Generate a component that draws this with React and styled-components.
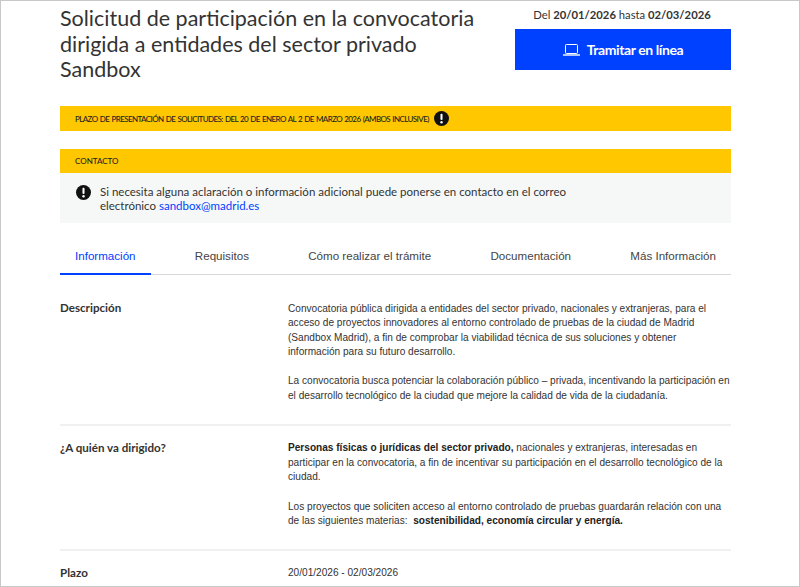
import React from "react";
import styled, { createGlobalStyle } from "styled-components";

const GlobalStyle = createGlobalStyle`
  html, body {
    margin: 0;
    padding: 0;
    background: #fff;
  }
  * {
    box-sizing: border-box;
  }
`;

const Frame = styled.div`
  width: 800px;
  height: 587px;
  overflow: hidden;
  border: 1px solid #c8c8c8;
  background: #fff;
  font-family: Lato, "Liberation Sans", sans-serif;
  color: #333;
`;

const Page = styled.div`
  width: 671px;
  margin-left: 59px;
  padding-top: 4px;
`;

const Header = styled.header`
  display: flex;
  justify-content: space-between;
  height: 101px;
`;

const Title = styled.h1`
  margin: 1px 0 0;
  width: 430px;
  font-size: 21.5px;
  line-height: 25.6px;
  font-weight: 400;
  color: #333;
`;

const Aside = styled.div`
  width: 216px;
  display: flex;
  flex-direction: column;
  align-items: stretch;
`;

const Dates = styled.div`
  height: 24px;
  padding-top: 1px;
  padding-right: 2px;
  font-size: 11.25px;
  line-height: 18px;
  text-align: center;
  b {
    font-weight: 700;
  }
`;

const TramitarButton = styled.button`
  height: 41px;
  border: 0;
  background: #0040ff;
  color: #fff;
  font-family: inherit;
  font-size: 14px;
  font-weight: 700;
  letter-spacing: -0.4px;
  display: flex;
  align-items: center;
  justify-content: center;
  gap: 7px;
`;

const Banner = styled.div`
  height: ${({ $tall }) => ($tall ? 25 : 24)}px;
  background: #ffc700;
  padding-left: 15px;
  display: flex;
  align-items: center;
  gap: 5px;
  font-size: 8px;
  font-weight: 500;
  letter-spacing: ${({ $tall }) => ($tall ? "-0.6px" : "0")};
  word-spacing: ${({ $tall }) => ($tall ? "0.8px" : "0")};
  color: #222;
  text-transform: uppercase;
`;

const ContactBlock = styled.section`
  margin-top: 18px;
`;

const ContactBody = styled.div`
  height: 50px;
  background: #f6f8f8;
  padding: 12px 14px 0 16px;
  display: flex;
  gap: 9px;
  font-size: 11.5px;
  line-height: 14px;
  a {
    color: #0040ff;
    text-decoration: none;
  }
`;

const ContactText = styled.div`
  width: 480px;
`;

const Tabs = styled.nav`
  margin-top: 18px;
  height: 34px;
  display: flex;
  justify-content: space-between;
  border-bottom: 1px solid #d8d8d8;
`;

const Tab = styled.div`
  height: 34px;
  padding: 7px 15px 0;
  font-family: "Liberation Sans", Arial, sans-serif;
  font-size: 11.6px;
  line-height: 16px;
  color: ${({ $active }) => ($active ? "#0040ff" : "#444")};
  border-bottom: 2px solid ${({ $active }) => ($active ? "#0040ff" : "transparent")};
`;

const Row = styled.section`
  display: grid;
  grid-template-columns: 228px 1fr;
  padding: ${({ $first }) => ($first ? "25px" : "14px")} 0 20px;
  border-bottom: ${({ $last }) => ($last ? "0" : "2px solid #f0f0f0")};
`;

const Label = styled.h3`
  margin: 0;
  font-size: 11.6px;
  line-height: 15px;
  font-weight: 700;
  color: #333;
`;

const Body = styled.div`
  padding-top: 1.5px;
  font-family: "Liberation Sans", Arial, sans-serif;
  font-size: 10.1px;
  line-height: 14.6px;
  color: #333;
  p {
    margin: 0 0 14.6px;
  }
  p:last-child {
    margin-bottom: 0;
  }
  b {
    color: #222;
  }
`;

const InfoIcon = () => (
  <svg width="15" height="15" viewBox="0 0 16 16" style={{ flex: "none" }}>
    <circle cx="8" cy="8" r="8" fill="#111" />
    <rect x="6.9" y="3" width="2.2" height="6.6" rx="1" fill="#fff" />
    <circle cx="8" cy="11.9" r="1.3" fill="#fff" />
  </svg>
);

const LaptopIcon = () => (
  <svg width="17" height="12" viewBox="0 0 17 12" fill="none" stroke="#fff" strokeWidth="1">
    <rect x="2.5" y="0.5" width="12" height="9" rx="0.8" />
    <path d="M0 11h17" strokeWidth="1.4" />
  </svg>
);

const tabs = ["Información", "Requisitos", "Cómo realizar el trámite", "Documentación", "Más Información"];

export default function App() {
  return (
    <Frame>
      <GlobalStyle />
      <Page>
        <Header>
          <Title>
            Solicitud de participación en la convocatoria dirigida a entidades del sector privado Sandbox
          </Title>
          <Aside>
            <Dates>
              Del <b>20/01/2026</b> hasta <b>02/03/2026</b>
            </Dates>
            <TramitarButton>
              <LaptopIcon />
              Tramitar en línea
            </TramitarButton>
          </Aside>
        </Header>

        <Banner $tall>
          Plazo de presentación de solicitudes: del 20 de enero al 2 de marzo 2026 (ambos inclusive)
          <InfoIcon />
        </Banner>

        <ContactBlock>
          <Banner>Contacto</Banner>
          <ContactBody>
            <InfoIcon />
            <ContactText>
              Si necesita alguna aclaración o información adicional puede ponerse en contacto en el correo
              electrónico <a href="#mail">sandbox@madrid.es</a>
            </ContactText>
          </ContactBody>
        </ContactBlock>

        <Tabs>
          {tabs.map((t, i) => (
            <Tab key={t} $active={i === 0}>
              {t}
            </Tab>
          ))}
        </Tabs>

        <Row $first>
          <Label>Descripción</Label>
          <Body>
            <p>
              Convocatoria pública dirigida a entidades del sector privado, nacionales y extranjeras, para el
              acceso de proyectos innovadores al entorno controlado de pruebas de la ciudad de Madrid
              (Sandbox Madrid), a fin de comprobar la viabilidad técnica de sus soluciones y obtener
              información para su futuro desarrollo.
            </p>
            <p>
              La convocatoria busca potenciar la colaboración público – privada, incentivando la participación en
              el desarrollo tecnológico de la ciudad que mejore la calidad de vida de la ciudadanía.
            </p>
          </Body>
        </Row>

        <Row>
          <Label>¿A quién va dirigido?</Label>
          <Body>
            <p>
              <b>Personas físicas o jurídicas del sector privado,</b> nacionales y extranjeras, interesadas en
              participar en la convocatoria, a fin de incentivar su participación en el desarrollo tecnológico de la
              ciudad.
            </p>
            <p>
              Los proyectos que soliciten acceso al entorno controlado de pruebas guardarán relación con una
              de las siguientes materias:&nbsp; <b>sostenibilidad, economía circular y energía.</b>
            </p>
          </Body>
        </Row>

        <Row $last>
          <Label>Plazo</Label>
          <Body>20/01/2026 - 02/03/2026</Body>
        </Row>
      </Page>
    </Frame>
  );
}
